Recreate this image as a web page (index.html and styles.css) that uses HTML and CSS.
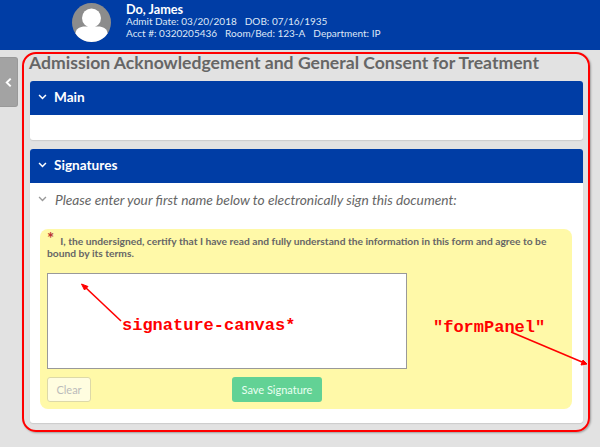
FILE: index.html
```html
<!DOCTYPE html>
<html lang="en">
<head>
  <meta charset="UTF-8" />
  <meta name="viewport" content="width=device-width, initial-scale=1.0" />
  <title>Admission Acknowledgement and General Consent for Treatment</title>
  <link rel="stylesheet" href="styles.css">
</head>
<body>
  <header class="patient-bar">
    <svg class="avatar" viewBox="0 0 39 39" width="39" height="39">
      <circle cx="19.5" cy="19.5" r="19.5" fill="#8c8c8c" />
      <circle cx="19.5" cy="15" r="9.5" fill="#fff" />
      <path d="M3.5 30.5 C3.5 26 8 23.5 13 23.5 H26 C31 23.5 35.5 26 35.5 30.5 C32 36 26 39 19.5 39 C13 39 7 36 3.5 30.5 Z" fill="#fff" />
    </svg>
    <div class="patient-info">
      <div class="patient-name">Do, James</div>
      <div class="patient-line"><span>Admit Date: 03/20/2018</span><span>DOB: 07/16/1935</span></div>
      <div class="patient-line"><span>Acct #: 0320205436</span><span>Room/Bed: 123-A</span><span>Department: IP</span></div>
    </div>
  </header>

  <div class="page">
    <button class="side-tab">
      <svg viewBox="0 0 8 12" width="7" height="11"><path d="M6.5 1.5 L2 6 L6.5 10.5" fill="none" stroke="#fff" stroke-width="2.2" /></svg>
    </button>

    <main class="content">
      <h1>Admission Acknowledgement and General Consent for Treatment</h1>

      <section class="panel">
        <div class="panel-head">
          <svg class="chev" viewBox="0 0 10 7" width="9" height="6"><path d="M1 1.2 L5 5.2 L9 1.2" fill="none" stroke="#fff" stroke-width="1.8" /></svg>
          Main
        </div>
        <div class="panel-body-empty"></div>
      </section>

      <section class="panel">
        <div class="panel-head">
          <svg class="chev" viewBox="0 0 10 7" width="9" height="6"><path d="M1 1.2 L5 5.2 L9 1.2" fill="none" stroke="#fff" stroke-width="1.8" /></svg>
          Signatures
        </div>
        <div class="panel-body">
          <div class="instruction">
            <svg class="chev" viewBox="0 0 10 7" width="9" height="6"><path d="M1 1.2 L5 5.2 L9 1.2" fill="none" stroke="#999" stroke-width="1.6" /></svg>
            Please enter your first name below to electronically sign this document:
          </div>
          <div class="form-panel">
            <p class="certify"><span class="req">*</span>I, the undersigned, certify that I have read and fully understand the information in this form and agree to be bound by its terms.</p>
            <div class="sig-canvas"></div>
            <div class="sig-actions">
              <button class="btn-clear">Clear</button>
              <button class="btn-save">Save Signature</button>
            </div>
          </div>
        </div>
      </section>
    </main>
  </div>

  <div class="outline"></div>
  <div class="note note-canvas">signature-canvas*</div>
  <div class="note note-panel">"formPanel"</div>
  <svg class="arrows" viewBox="0 0 600 447" width="600" height="447">
    <path d="M121 321 L85 287" fill="none" stroke="#f00" stroke-width="1.6" />
    <path d="M81.5 284 L88 286.5 L84.5 290 Z" fill="#f00" stroke="#f00" />
    <path d="M511 332 L582 362" fill="none" stroke="#f00" stroke-width="1.6" />
    <path d="M587 364 L581 365 L583 360 Z" fill="#f00" stroke="#f00" />
  </svg>
</body>
</html>
```

FILE: styles.css
```css
body {
  font-family: Lato, 'Open Sans', sans-serif;
  background: #e2e2e2;
  margin: 0;
  padding: 0;
  height: 447px;
  overflow: hidden;
}
.patient-bar {
  display: flex;
  align-items: flex-start;
  height: 50px;
  box-sizing: border-box;
  padding: 3px 0 0 72px;
  background: #003da5;
  color: #fff;
}
.avatar {
  margin-right: 15px;
}
.patient-name {
  font-size: 12.7px;
  font-weight: bold;
  line-height: 12px;
}
.patient-line {
  display: flex;
  gap: 8px;
  font-size: 10px;
  line-height: 12px;
  color: #dfe8f7;
}
.page {
  display: flex;
  align-items: flex-start;
  padding: 7px 17px 0 0;
}
.side-tab {
  display: flex;
  align-items: center;
  justify-content: center;
  width: 18px;
  height: 50px;
  margin-right: 12px;
  padding: 0;
  border: 1px solid #999;
  border-left: none;
  border-radius: 0 3px 3px 0;
  background: #a3a3a3;
}
.content {
  flex: 1;
  min-width: 0;
}
h1 {
  margin: -3px 0 9px -1px;
  font-size: 17.6px;
  line-height: 18px;
  font-weight: bold;
  color: #666;
  white-space: nowrap;
}
.panel {
  margin-bottom: 9px;
  background: #fff;
  border-radius: 3px;
  box-shadow: 0 1px 1px #ccc;
}
.panel-head {
  display: flex;
  align-items: center;
  height: 34px;
  padding: 0 0 3px 8px;
  box-sizing: border-box;
  background: #003da5;
  border-radius: 3px 3px 0 0;
  color: #fff;
  font-size: 13.6px;
  font-weight: bold;
}
.chev {
  margin-right: 7px;
}
.panel-body-empty {
  height: 25px;
}
.panel-body {
  height: 240px;
  padding: 0 10px;
}
.instruction {
  display: flex;
  align-items: center;
  height: 34px;
  box-sizing: border-box;
  padding-bottom: 2px;
  margin-left: -2px;
  font-size: 13.75px;
  font-style: italic;
  color: #666;
  white-space: nowrap;
}
.instruction .chev {
  margin-right: 8px;
}
.form-panel {
  height: 180px;
  box-sizing: border-box;
  margin: 12px 1px 0 0;
  padding: 5px 7px 0;
  background: #fff9a8;
  border-radius: 8px;
}
.certify {
  margin: 0 0 14px;
  font-size: 10.25px;
  line-height: 12px;
  font-weight: bold;
  color: #666;
}
.req {
  margin-right: 6px;
  font-size: 17px;
  line-height: 10px;
  color: #b33;
}
.sig-canvas {
  width: 358px;
  height: 94px;
  background: #fff;
  border: 1px solid #999;
}
.sig-actions {
  display: flex;
  margin-top: 8px;
}
.btn-clear, .btn-save {
  height: 25px;
  padding: 0;
  font-family: inherit;
  font-size: 11px;
  border-radius: 3px;
}
.btn-clear {
  width: 44px;
  margin-right: 141px;
  background: #fffde0;
  border: 1px solid #ddd9a8;
  color: #bbb;
}
.btn-save {
  width: 90px;
  background: #62d295;
  border: none;
  color: #eafff2;
}
.outline {
  position: absolute;
  left: 22px;
  top: 52px;
  width: 564px;
  height: 376px;
  border: 2px solid #f00;
  border-radius: 14px;
  box-shadow: 1px 1px 2px rgba(0,0,0,0.3);
}
.note {
  position: absolute;
  font-family: 'Liberation Mono', monospace;
  font-size: 17px;
  line-height: 16px;
  font-weight: bold;
  color: #f00;
}
.note-canvas {
  left: 122px;
  top: 318px;
}
.note-panel {
  left: 433px;
  top: 320px;
}
.arrows {
  position: absolute;
  left: 0;
  top: 0;
}
```
